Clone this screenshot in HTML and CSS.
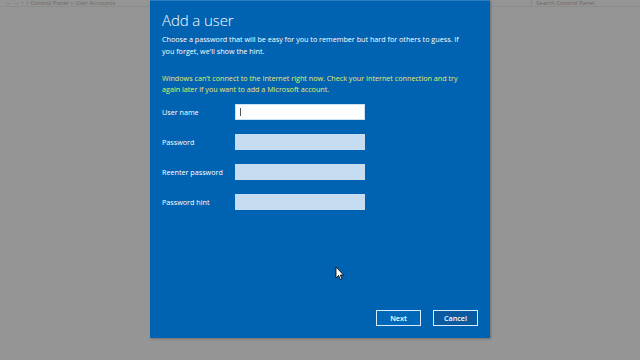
FILE: index.html
```html
<!DOCTYPE html>
<html lang="en">
<head>
    <meta charset="UTF-8">
    <meta name="viewport" content="width=device-width, initial-scale=1.0">
    <title>Add a user</title>
    <link rel="stylesheet" href="styles.css">
</head>
<body>
    <div class="back-window">
        <div class="address">&#8592; &#8594; &#8593; | Control Panel &gt; User Accounts</div>
        <div class="search">Search Control Panel</div>
    </div>

    <div class="dialog">
        <h1>Add a user</h1>
        <p class="intro">Choose a password that will be easy for you to remember but hard for others to guess. If you forget, we'll show the hint.</p>

        <p class="warning">Windows can't connect to the Internet right now. Check your Internet connection and try again later if you want to add a Microsoft account.</p>

        <div class="form">
            <label for="userName">User name</label>
            <div class="field active"><span class="caret"></span></div>

            <label for="password">Password</label>
            <div class="field"></div>

            <label for="reenter">Reenter password</label>
            <div class="field"></div>

            <label for="hint">Password hint</label>
            <div class="field"></div>
        </div>

        <div class="spacer"></div>

        <div class="buttons">
            <button class="next">Next</button>
            <button class="cancel">Cancel</button>
        </div>
    </div>

    <svg class="pointer" width="10" height="15" viewBox="0 0 10 15">
        <path d="M1 1 L1 12 L3.6 9.6 L5.4 13.6 L7 12.9 L5.3 9 L8.6 9 Z" fill="#fff" stroke="#000" stroke-width="0.8"/>
    </svg>
</body>
</html>
```

FILE: styles.css
```css
body {
    margin: 0;
    width: 640px;
    height: 360px;
    overflow: hidden;
    background-color: #959595;
    font-family: "Open Sans", "Noto Sans", sans-serif;
    display: flex;
    justify-content: center;
    align-items: flex-start;
}

.back-window {
    position: absolute;
    top: 0;
    left: 0;
    width: 640px;
    height: 6px;
    display: flex;
    justify-content: space-between;
    font-size: 6px;
    line-height: 6px;
    color: #6a6a6a;
    border-bottom: 1px solid #8c8c8c;
}

.address {
    padding-left: 6px;
}

.search {
    width: 94px;
    margin-right: 10px;
    padding-left: 4px;
    border-left: 1px solid #888;
}

.dialog {
    position: relative;
    width: 340px;
    height: 338px;
    box-sizing: border-box;
    background-color: #0063b1;
    border-top: 1px solid #2a7bc0;
    padding: 8px 24px 12px 12px;
    display: flex;
    flex-direction: column;
    color: #fff;
    box-shadow: 1px 1px 2px rgba(0, 0, 0, 0.25);
}

h1 {
    margin: 0;
    font-size: 15px;
    font-weight: 300;
    line-height: 22px;
    letter-spacing: -0.1px;
}

.intro {
    margin: 2px 0 0 0;
    font-size: 7.2px;
    line-height: 12px;
}

.warning {
    margin: 16px 0 0 0;
    font-size: 7.2px;
    line-height: 10.5px;
    color: #e4ec6c;
}

.form {
    margin-top: 10px;
    display: grid;
    grid-template-columns: 73px 130px;
    row-gap: 14px;
    align-items: center;
}

label {
    font-size: 7.2px;
}

.field {
    height: 16px;
    box-sizing: border-box;
    background-color: #c6ddf1;
}

.field.active {
    background-color: #fff;
    border: 1px solid #c9e2f7;
    padding: 3px 4px;
}

.caret {
    display: block;
    width: 1px;
    height: 8px;
    background-color: #555;
}

.spacer {
    flex: 1;
}

.buttons {
    display: flex;
    justify-content: flex-end;
    gap: 12px;
    margin-right: -12px;
}

.buttons button {
    width: 45px;
    height: 16px;
    padding: 0;
    font-family: "Open Sans", "Noto Sans", sans-serif;
    font-size: 7.2px;
    font-weight: 600;
    color: #fff;
    border: 1px solid #d6ecff;
    border-radius: 0;
    cursor: pointer;
}

.next {
    background-color: #0068b8;
}

.cancel {
    background-color: #0a5aa0;
}

.pointer {
    position: absolute;
    left: 335px;
    top: 266px;
}
```
